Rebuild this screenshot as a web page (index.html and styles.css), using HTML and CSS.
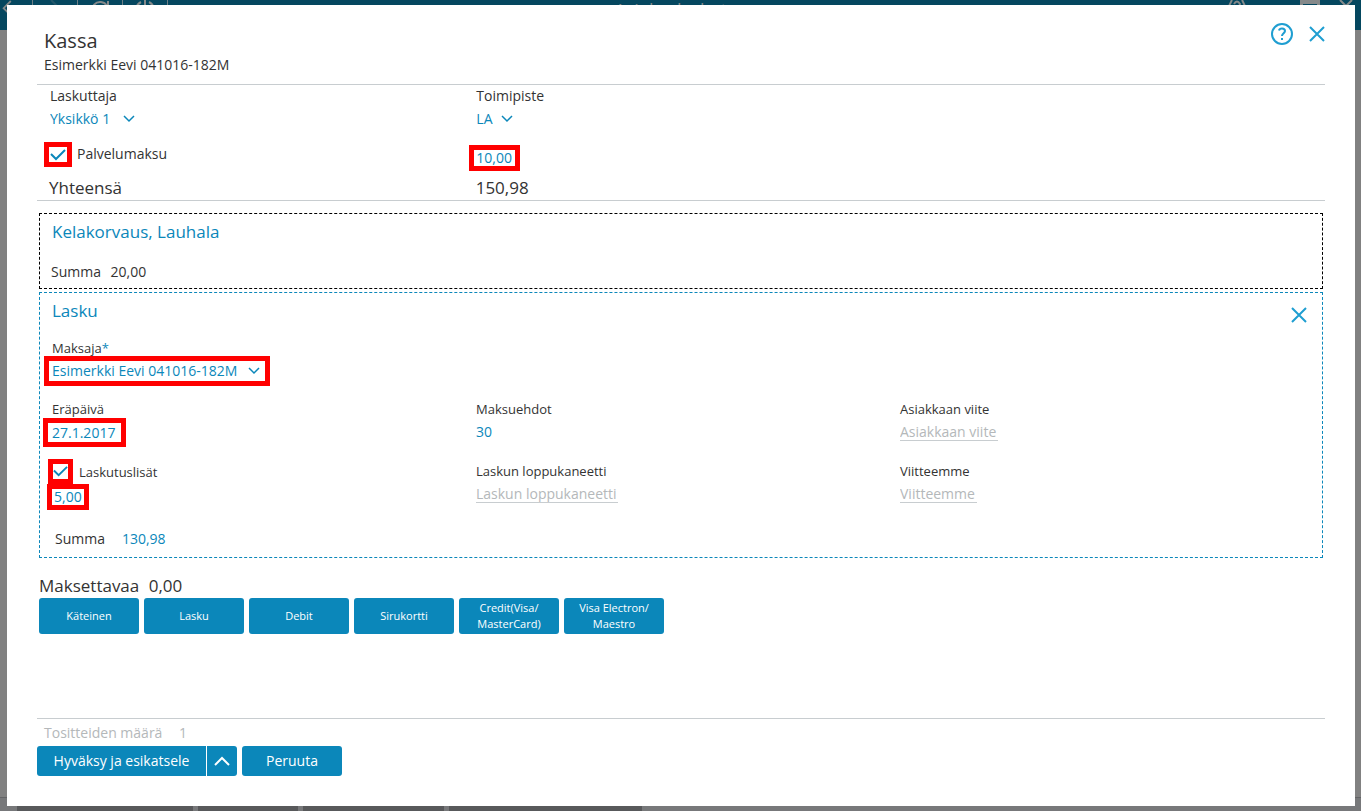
FILE: index.html
```html
<!DOCTYPE html>
<html lang="fi">

<head>
    <meta charset="UTF-8">
    <meta name="viewport" content="width=device-width, initial-scale=1.0">
    <title>Kassa</title>
    <link rel="stylesheet" href="styles.css">
</head>

<body>
    <!-- dimmed application behind the dialog -->
    <div class="app">
        <header class="app-header">
            <nav class="app-nav">
                <span class="app-tool"><svg width="20" height="20" viewBox="0 0 20 20"><path d="M12 0L4 8l8 8" /></svg></span>
                <span class="app-tool faded"><svg width="20" height="20" viewBox="0 0 20 20"><path d="M6 0l8 8-8 8" /></svg></span>
                <span class="app-tool"><svg width="20" height="20" viewBox="0 0 20 20"><path d="M18 1v5h-5M17 6a8 8 0 1 0 1 5" /></svg></span>
                <span class="app-tool"><svg width="20" height="20" viewBox="0 0 20 20"><path d="M6 2a9 9 0 1 0 8 0M10 0v9" /></svg></span>
            </nav>
            <span class="app-title">Asiakaslaskutus</span>
            <div class="app-window">
                <svg width="20" height="20" viewBox="0 0 20 20"><path d="M5 0q-6 9 0 18M15 0q6 9 0 18M7 4q3-5 6 0q0 2-3 5v2" /></svg>
                <svg class="restore" width="20" height="20" viewBox="0 0 20 20"><path d="M1 2h18M1 0v14h18V0" /></svg>
                <svg width="20" height="20" viewBox="0 0 20 20"><path d="M4 0l12 12M16 0L4 12" /></svg>
            </div>
        </header>
        <div class="app-tabs">
            <span class="app-tab tab-wide"></span>
            <span class="app-tab tab-small"></span>
            <span class="app-tab tab-medium"></span>
            <span class="app-tab tab-large"></span>
        </div>
    </div>

    <main class="dialog">
        <header class="dialog-header">
            <div>
                <h1>Kassa</h1>
                <p class="patient">Esimerkki Eevi 041016-182M</p>
            </div>
            <div class="dialog-tools">
                <button type="button" class="icon-button" aria-label="Ohje">
                    <svg width="24" height="24" viewBox="0 0 24 24">
                        <circle cx="12" cy="12" r="10" />
                        <path d="M9 8.500Q9.500 6.500 12 6.500q3 0 3 2.500c0 2-3 2.500-3 5M12 16v2" />
                    </svg>
                </button>
                <button type="button" class="icon-button" aria-label="Sulje">
                    <svg width="16" height="16" viewBox="0 0 16 16"><path d="M1 1l14 14M15 1L1 15" /></svg>
                </button>
            </div>
        </header>

        <section class="summary">
            <div class="columns">
                <div>
                    <label class="label" for="laskuttaja">Laskuttaja</label>
                    <div class="select wide-gap">
                        <select id="laskuttaja">
                            <option>Yksikkö 1</option>
                        </select>
                        <svg width="12" height="8" viewBox="0 0 12 8"><path d="M1 1l5 5 5-5" /></svg>
                    </div>
                </div>
                <div>
                    <label class="label" for="toimipiste">Toimipiste</label>
                    <div class="select">
                        <select id="toimipiste">
                            <option>LA</option>
                        </select>
                        <svg width="12" height="8" viewBox="0 0 12 8"><path d="M1 1l5 5 5-5" /></svg>
                    </div>
                </div>
            </div>
            <div class="columns fee-row">
                <div class="check">
                    <span class="mark mark-check"><input type="checkbox" id="palvelumaksu" checked></span>
                    <label for="palvelumaksu">Palvelumaksu</label>
                </div>
                <div class="fee">
                    <span class="mark"><input type="text" class="amount" value="10,00" aria-label="Palvelumaksu"></span>
                </div>
            </div>
            <div class="columns total">
                <span>Yhteensä</span>
                <span>150,98</span>
            </div>
        </section>

        <section class="panel">
            <h2>Kelakorvaus, Lauhala</h2>
            <p class="sum">Summa <span>20,00</span></p>
        </section>

        <section class="panel invoice">
            <div class="panel-head">
                <h2>Lasku</h2>
                <button type="button" class="icon-button" aria-label="Poista lasku">
                    <svg width="16" height="16" viewBox="0 0 16 16"><path d="M1 1l14 14M15 1L1 15" /></svg>
                </button>
            </div>
            <div class="payer">
                <label class="label" for="maksaja">Maksaja<span class="required">*</span></label>
                <div class="mark mark-payer">
                    <div class="select">
                        <select id="maksaja">
                            <option>Esimerkki Eevi 041016-182M</option>
                        </select>
                        <svg width="12" height="8" viewBox="0 0 12 8"><path d="M1 1l5 5 5-5" /></svg>
                    </div>
                </div>
            </div>
            <div class="columns">
                <div class="field">
                    <label class="label" for="erapaiva">Eräpäivä</label>
                    <span class="mark mark-date"><input type="text" id="erapaiva" class="date" value="27.1.2017"></span>
                </div>
                <div class="field">
                    <label class="label" for="maksuehdot">Maksuehdot</label>
                    <input type="text" id="maksuehdot" class="amount" value="30">
                </div>
                <div class="field">
                    <label class="label" for="asiakkaan-viite">Asiakkaan viite</label>
                    <input type="text" id="asiakkaan-viite" class="empty customer-ref" placeholder="Asiakkaan viite">
                </div>
            </div>
            <div class="columns extras">
                <div>
                    <div class="check">
                        <span class="mark mark-check"><input type="checkbox" id="laskutuslisat" checked></span>
                        <label for="laskutuslisat">Laskutuslisät</label>
                    </div>
                    <span class="mark mark-extra"><input type="text" class="extra" value="5,00" aria-label="Laskutuslisät"></span>
                </div>
                <div class="field">
                    <label class="label" for="loppukaneetti">Laskun loppukaneetti</label>
                    <input type="text" id="loppukaneetti" class="empty closing" placeholder="Laskun loppukaneetti">
                </div>
                <div class="field">
                    <label class="label" for="viitteemme">Viitteemme</label>
                    <input type="text" id="viitteemme" class="empty our-ref" placeholder="Viitteemme">
                </div>
            </div>
            <div class="sum">
                <label for="summa">Summa</label>
                <input type="text" id="summa" class="amount" value="130,98">
            </div>
        </section>

        <section class="payment">
            <p class="due">Maksettavaa <span>0,00</span></p>
            <div class="methods">
                <button type="button">Käteinen</button>
                <button type="button">Lasku</button>
                <button type="button">Debit</button>
                <button type="button">Sirukortti</button>
                <button type="button">Credit(Visa/<br>MasterCard)</button>
                <button type="button">Visa Electron/<br>Maestro</button>
            </div>
        </section>

        <footer class="dialog-footer">
            <p class="receipts">Tositteiden määrä <span>1</span></p>
            <div class="actions">
                <button type="button" class="approve">Hyväksy ja esikatsele</button>
                <button type="button" class="more" aria-label="Lisää toimintoja">
                    <svg width="16" height="10" viewBox="0 0 16 10"><path d="M1 9l7-7 7 7" /></svg>
                </button>
                <button type="button" class="cancel">Peruuta</button>
            </div>
        </footer>
    </main>
</body>

</html>
```
FILE: styles.css
```css
* {
    box-sizing: border-box;
}

body {
    margin: 0;
    font-family: "Open Sans", "Noto Sans", sans-serif;
    font-size: 14px;
    line-height: 20px;
    color: #333;
    background-color: #818181;
}

h1,
h2,
p {
    margin: 0;
    font-weight: normal;
}

button,
input,
select {
    margin: 0;
    padding: 0;
    border: 0;
    font: inherit;
    color: #0b87ba;
    background: none;
}

svg {
    display: block;
    fill: none;
    stroke: currentColor;
    stroke-width: 2;
}

/* application behind the dialog */
.app {
    display: flex;
    flex-direction: column;
    justify-content: space-between;
    height: 100vh;
    overflow: hidden;
}

.app-header {
    display: grid;
    grid-template-columns: 1fr auto 1fr;
    height: 30px;
    color: #85898a;
    background-color: #05475f;
}

.app-nav {
    display: flex;
}

.app-tool {
    display: flex;
    justify-content: center;
    width: 45px;
    border-right: 1px solid #6f7f85;
}

.app-tool:first-child {
    width: 33px;
    padding-right: 14px;
}

.faded {
    color: #24566a;
}

.app-title {
    font-size: 18px;
    line-height: 20px;
}

.app-window {
    display: flex;
    justify-content: flex-end;
    padding-right: 5px;
}

.app-window .restore {
    margin: 0 16px 0 53px;
    stroke-width: 4;
}

.app-tabs {
    display: flex;
    gap: 5px;
    height: 14px;
    padding: 6px 17px 0;
    border-top: 1px solid #636466;
    background-color: #77787a;
}

.app-tab {
    background-color: #58595b;
}

.tab-wide {
    width: 176px;
}

.tab-small {
    width: 100px;
}

.tab-medium {
    width: 141px;
}

.tab-large {
    width: 193px;
}

/* dialog */
.dialog {
    position: absolute;
    top: 5px;
    right: 6px;
    bottom: 5px;
    left: 7px;
    display: flex;
    flex-direction: column;
    padding: 0 30px 30px;
    background-color: #fff;
}

.dialog-header {
    display: flex;
    justify-content: space-between;
    padding: 22px 0 10px 7px;
    border-bottom: 1px solid #c8cdd0;
}

h1 {
    font-size: 20px;
    line-height: 28px;
}

.patient {
    line-height: 19px;
}

.dialog-tools {
    display: flex;
    align-items: center;
    gap: 15px;
    height: 14px;
}

.icon-button {
    color: #1f9ed1;
}

.columns {
    display: grid;
    grid-template-columns: repeat(3, 1fr);
    column-gap: 2px;
}

.label {
    display: block;
}

.select {
    display: flex;
    align-items: center;
    gap: 8px;
    color: #0b87ba;
}

.wide-gap {
    gap: 12px;
}

.select select {
    appearance: none;
}

.select svg {
    stroke-width: 1.5;
}

/* red highlight frames */
.mark {
    display: block;
    width: fit-content;
    border: 5px solid #f00;
}

.mark input {
    display: block;
    height: 16px;
    line-height: 16px;
}

.check {
    display: flex;
    align-items: center;
    align-self: start;
    gap: 6px;
}

.check input {
    appearance: none;
    width: 15px;
    height: 15px;
    background: url("data:image/svg+xml,%3Csvg xmlns='http://www.w3.org/2000/svg' viewBox='0 0 16 15'%3E%3Cpath d='M1 7l5 5 9-9' fill='none' stroke='%230b87ba' stroke-width='2'/%3E%3C/svg%3E") center no-repeat;
}

.summary {
    padding-left: 13px;
    border-bottom: 1px solid #c8cdd0;
}

.summary .columns {
    column-gap: 4px;
}

.summary .label {
    line-height: 22px;
}

.summary .select {
    height: 24px;
}

.fee-row {
    height: 30px;
    margin-top: 10px;
}

.fee-row .check {
    gap: 5px;
    margin-left: -6px;
    line-height: 26px;
}

.fee-row .check input {
    width: 18px;
}

.fee {
    align-self: end;
    margin-left: -7px;
}

.fee .mark {
    padding-left: 2px;
}

.amount {
    width: 60px;
}

.fee .amount {
    width: 39px;
}

.total {
    margin-top: 5px;
    margin-left: -1px;
    font-size: 17px;
    line-height: 24px;
}

/* panels */
.panel {
    margin: 12px 2px 0;
    padding: 6px 0 6px 12px;
    border: 1px dashed #000;
}

h2 {
    font-size: 17px;
    line-height: 24px;
    color: #0b87ba;
}

.panel .sum {
    margin-top: 18px;
    margin-left: -1px;
}

.sum span {
    margin-left: 6px;
}

.invoice {
    margin-top: 3px;
    padding-bottom: 8px;
    border-color: #0b87ba;
}

.panel-head {
    display: flex;
    justify-content: space-between;
    align-items: flex-end;
    padding-right: 15px;
}

.invoice .label,
.invoice .check {
    font-size: 13px;
    line-height: 18px;
}

.required {
    color: #0b87ba;
}

.payer {
    margin: 17px 0 14px;
}

.invoice .payer .label {
    line-height: 16px;
}

.mark-payer {
    margin-left: -8px;
    padding: 0 5px 0 3px;
}

.mark-payer .select {
    gap: 10px;
}

.field .label + input {
    display: block;
    height: 18px;
    margin-top: 5px;
}

.mark-date {
    margin-left: -9px;
    padding: 2px 3px 1px 4px;
}

.date {
    width: 66px;
}

.empty {
    border-bottom: 1px solid #c8cdd0;
}

.empty::placeholder {
    color: #b4b8ba;
    opacity: 1;
}

.customer-ref {
    width: 98px;
}

.closing {
    width: 142px;
}

.our-ref {
    width: 77px;
}

.extras {
    margin-top: 12px;
}

.invoice .extras .label {
    line-height: 24px;
}

.extras .field .label + input {
    margin-top: 2px;
}

.extras .check {
    margin-left: -4px;
}

.mark-extra {
    margin-left: -5px;
    padding-left: 2px;
}

.extra {
    width: 30px;
}

.invoice .sum {
    display: flex;
    gap: 17px;
    margin-top: 19px;
    margin-left: 3px;
}

/* payment */
.payment {
    margin: 16px 2px 0;
}

.due {
    font-size: 17px;
    line-height: 24px;
}

.due span {
    margin-left: 5px;
}

.methods {
    display: flex;
    gap: 5px;
}

.methods button {
    width: 100px;
    height: 36px;
    border-radius: 3px;
    font-size: 11px;
    line-height: 16px;
    color: #fff;
    background-color: #0b87ba;
}

.dialog-footer {
    margin-top: auto;
    border-top: 1px solid #c8cdd0;
}

.receipts {
    padding: 4px 0 3px 7px;
    color: #b4b8ba;
}

.receipts span {
    margin-left: 13px;
}

.actions {
    display: flex;
}

.actions button {
    height: 30px;
    color: #fff;
    background-color: #0b87ba;
}

.actions .approve {
    width: 169px;
    border-radius: 3px 0 0 3px;
}

.actions .more {
    display: grid;
    place-items: center;
    width: 30px;
    margin-left: 1px;
    border-radius: 0 3px 3px 0;
}

.actions .cancel {
    width: 100px;
    margin-left: 5px;
    border-radius: 3px;
}
```
